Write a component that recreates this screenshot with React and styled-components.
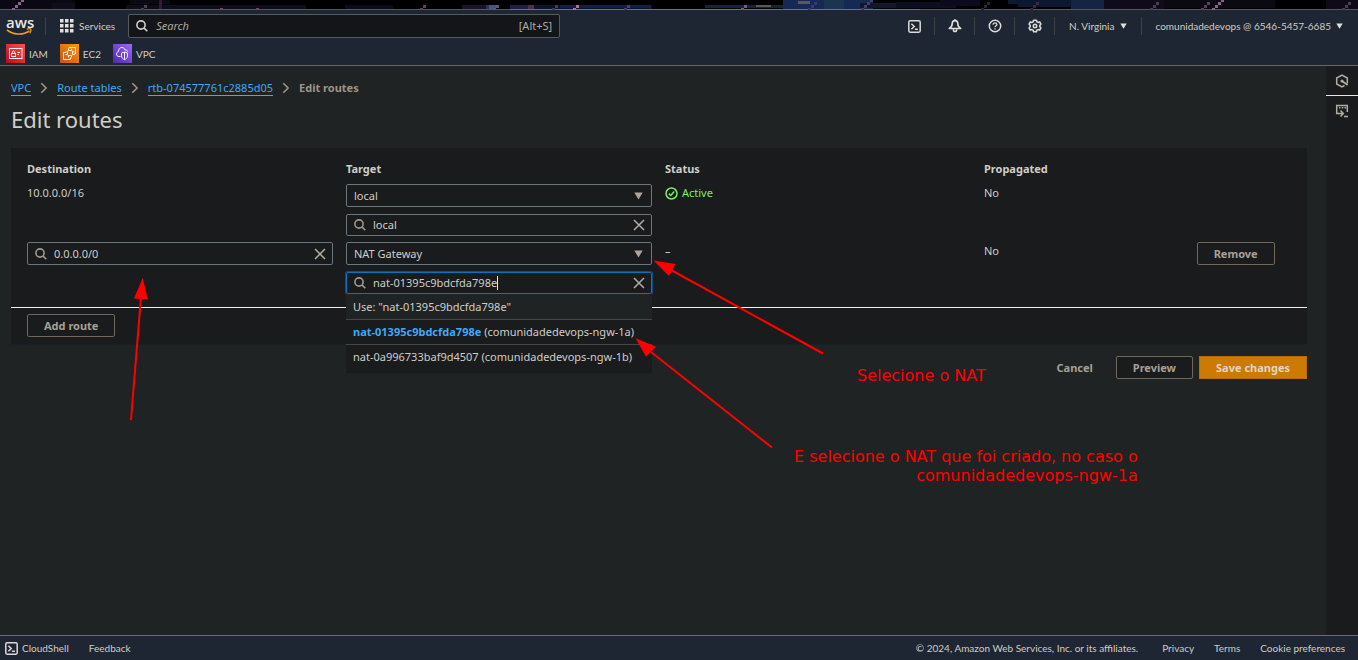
import React from "react";
import styled, { createGlobalStyle, css } from "styled-components";

const GlobalStyle = createGlobalStyle`
  * { box-sizing: border-box; }
  html, body { margin: 0; padding: 0; }
  body {
    background: #1f2324;
    color: #d1cdc7;
    font-family: "Noto Sans", "Open Sans", sans-serif;
    font-size: 11px;
    line-height: 18px;
  }
  button, input, select { font: inherit; color: inherit; margin: 0; }
`;

const Page = styled.div`
  position: relative;
  display: flex;
  flex-direction: column;
  min-height: 100vh;
`;

/* ---------- desktop strip above the console ---------- */

const Strip = styled.svg`
  display: block;
  width: 100%;
  height: 10px;
  background: #000;
`;

/* ---------- header ---------- */

const Header = styled.header`
  background: #1d2632;
  border-bottom: 1px solid #6b665c;
  font-family: Lato, sans-serif;
  font-size: 10px;
`;

const NavRow = styled.div`
  display: flex;
  align-items: center;
  height: 32px;
  padding: 0 15px 0 6px;
`;

const Logo = styled.a`
  display: flex;
  flex-direction: column;
  width: 25px;
  color: #e8e6e3;
  text-decoration: none;
  font: 600 15px/12px "Open Sans", sans-serif;
  svg { display: block; }
`;

const Divider = styled.span`
  width: 1px;
  height: 18px;
  background: #3a4147;
  margin: 0 ${(p) => p.$after || 0}px 0 ${(p) => p.$before || 0}px;
`;

const NavButton = styled.button`
  display: flex;
  align-items: center;
  justify-content: center;
  gap: 5px;
  min-width: ${(p) => (p.$icon ? 39 : 0)}px;
  border: 0;
  padding: 0 ${(p) => p.$right || 0}px 0 ${(p) => p.$left || 0}px;
  background: none;
  white-space: nowrap;
`;

const GlobalSearch = styled.label`
  display: flex;
  align-items: center;
  gap: 8px;
  width: 432px;
  height: 24px;
  margin-left: 13px;
  padding: 0 7px;
  background: #131519;
  border: 1px solid #565c5e;
  border-radius: 2px;
  font-family: "Noto Sans", sans-serif;
  font-size: 11px;
  color: #b0aaa0;
  input {
    flex: 1;
    min-width: 0;
    border: 0;
    padding: 0;
    outline: 0;
    background: none;
  }
  input::placeholder { color: #b0aaa0; font-style: italic; opacity: 1; }
`;

const NavEnd = styled.div`
  display: flex;
  align-items: center;
  margin-left: auto;
`;

const Favorites = styled.nav`
  display: flex;
  gap: 12px;
  height: 23px;
  padding: 2px 6px 0;
`;

const Favorite = styled.a`
  display: flex;
  align-items: center;
  gap: 4px;
  height: 19px;
  color: #d1cdc7;
  text-decoration: none;
`;

/* ---------- body ---------- */

const Body = styled.div`
  display: flex;
  flex: 1;
`;

const Main = styled.main`
  flex: 1;
  min-width: 0;
  padding: 13px 19px 0 11px;
`;

const Breadcrumbs = styled.nav`
  display: flex;
  align-items: flex-start;
  gap: 8px;
  height: 18px;
  color: #9d9488;
  font-weight: 700;
  svg { align-self: center; }
`;

const Crumb = styled.a`
  height: 17px;
  color: #41a8f6;
  font-weight: 400;
  text-decoration: none;
  border-bottom: 1px solid #41a8f6;
`;

const Title = styled.h1`
  margin: 8px 0 15px;
  font-size: 22px;
  line-height: 28px;
  font-weight: 400;
`;

const Panel = styled.section`
  background: #191b1c;
  border-bottom: 1px solid #182226;
`;

const Routes = styled.table`
  width: calc(100% - 20px);
  margin-left: 16px;
  table-layout: fixed;
  border-collapse: collapse;
  th {
    height: 36px;
    padding: 12px 0 6px;
    text-align: left;
    font-weight: 700;
  }
  td { padding: 0 13px 6px 0; vertical-align: top; }
`;

const Col = styled.col`
  width: ${(p) => p.$w}%;
`;

const Stack = styled.div`
  position: relative;
  display: flex;
  flex-direction: column;
  gap: 7px;
`;

const SelectBox = styled.div`
  display: grid;
  align-items: center;
  height: 23px;
  border: 1px solid #6b767d;
  border-radius: 2px;
  select, svg { grid-area: 1 / 1; }
  select {
    appearance: none;
    width: 100%;
    height: 21px;
    padding: 0 7px;
    border: 0;
    outline: 0;
    background: transparent;
  }
  svg { justify-self: end; margin-right: 8px; pointer-events: none; }
`;

const SearchBox = styled.div`
  display: flex;
  align-items: center;
  height: ${(p) => (p.$tall ? 23 : 22)}px;
  padding: 0 6px 0 7px;
  border: 1px solid #6b767d;
  border-radius: 2px;
  ${(p) =>
    p.$active &&
    css`
      border-color: #0b72bd;
      box-shadow: 0 0 0 1px #0b4f80;
    `}
  input {
    field-sizing: content;
    min-width: 20px;
    height: 18px;
    margin-left: 7px;
    padding: 0;
    border: 0;
    outline: 0;
    background: none;
  }
`;

const Caret = styled.span`
  width: 1px;
  height: 14px;
  background: #e8e6e3;
`;

const ClearButton = styled.button`
  display: flex;
  margin-left: auto;
  padding: 0;
  border: 0;
  background: none;
`;

const Menu = styled.ul`
  position: absolute;
  top: 100%;
  left: 0;
  right: 0;
  z-index: 2;
  height: 80px;
  margin: 0;
  padding: 0;
  list-style: none;
  background: #191b1c;
  border-bottom: 1px solid #182226;
`;

const MenuItem = styled.li`
  height: ${(p) => (p.$first ? 26 : 25)}px;
  padding: ${(p) => (p.$first ? 4 : 3)}px 7px;
  white-space: nowrap;
  background: ${(p) => (p.$first ? "#1f2324" : "transparent")};
  border-bottom: 1px solid ${(p) => (p.$last ? "transparent" : "#42474a")};
  b { color: #41a8f6; }
`;

const Status = styled.span`
  display: flex;
  align-items: center;
  gap: 4px;
  color: #82e96b;
`;

const Button = styled.button`
  height: 23px;
  padding: 0 16px;
  border: 1px solid ${(p) => (p.$primary ? "#b56d06" : p.$plain ? "transparent" : "#706759")};
  border-radius: ${(p) => (p.$primary ? 0 : 2)}px;
  background: ${(p) => (p.$primary ? "#cc7a00" : p.$plain ? "transparent" : "#191b1c")};
  color: ${(p) => (p.$primary ? "#ddd6cb" : "#a8a095")};
  font-weight: 700;
  line-height: 18px;
  white-space: nowrap;
`;

const PanelFooter = styled.div`
  margin-top: 7px;
  padding: 6px 16px 7px;
  border-top: 1px solid #f0efed;
`;

const Actions = styled.div`
  display: flex;
  justify-content: flex-end;
  gap: 6px;
  margin-top: 11px;
`;

const Rail = styled.aside`
  width: 32px;
  background: #191b1c;
`;

const RailButton = styled.button`
  display: flex;
  align-items: center;
  justify-content: center;
  width: 100%;
  height: 30px;
  padding: 0;
  border: 0;
  border-bottom: 1px solid ${(p) => (p.$current ? "#e8e6e3" : "transparent")};
  background: none;
`;

/* ---------- footer ---------- */

const Footer = styled.footer`
  display: flex;
  align-items: center;
  gap: 20px;
  height: 25px;
  padding: 0 13px 0 5px;
  background: #1d2632;
  border-top: 1px solid #736a5c;
  font-family: Lato, sans-serif;
  font-size: 10px;
  white-space: nowrap;
`;

const FooterLink = styled.a`
  display: flex;
  align-items: center;
  gap: 4px;
  color: #d1cdc7;
  text-decoration: none;
`;

const Legal = styled.div`
  display: flex;
  gap: 20px;
  margin-left: auto;
  span { margin-right: 4px; }
`;

/* ---------- annotations over the page ---------- */

const Arrows = styled.svg`
  position: absolute;
  top: 0;
  left: 0;
  z-index: 3;
  pointer-events: none;
`;

const Note = styled.p`
  position: absolute;
  left: ${(p) => p.$x}px;
  top: ${(p) => p.$y}px;
  z-index: 3;
  margin: 0;
  color: #f00;
  font: 16px/19px "DejaVu Sans", sans-serif;
  text-align: right;
  white-space: nowrap;
`;

/* ---------- icons ---------- */

const SearchIcon = ({ color = "#a0978b" }) => (
  <svg width="12" height="12" viewBox="0 0 12 12" fill="none" stroke={color} strokeWidth="1.6">
    <circle cx="5" cy="5" r="4.1" />
    <path d="M7.900 7.900l3.400 3.400" />
  </svg>
);

const CloseIcon = () => (
  <svg width="12" height="12" viewBox="0 0 12 12" fill="none" stroke="#b3aca2" strokeWidth="1.5">
    <path d="M1 1l10 10M11 1L1 11" />
  </svg>
);

const TriangleIcon = ({ w = 9, h = 8, color = "#aea69b" }) => (
  <svg width={w} height={h} viewBox="0 0 9 8">
    <path d="M0.3 0.5h8.4L4.5 7.5z" fill={color} />
  </svg>
);

const ChevronIcon = () => (
  <svg width="10" height="12" viewBox="0 0 10 12" fill="none" stroke="#9d9488" strokeWidth="1.6">
    <path d="M2.300 1.200L7.100 6l-4.800 4.800" />
  </svg>
);

const ShellIcon = () => (
  <svg width="13" height="13" viewBox="0 0 13 13" fill="none" stroke="#dcdad6" strokeWidth="1.5">
    <rect x="0.8" y="0.8" width="11.4" height="11.4" rx="1.4" />
    <path d="M3.400 3.800l2.800 2.700-2.800 2.700M6.900 9.300h3" />
  </svg>
);

const BellIcon = () => (
  <svg width="14" height="14" viewBox="0 0 14 14" fill="none" stroke="#e3e1dd" strokeWidth="1.6" strokeLinejoin="round">
    <path d="M7 1.600c-2 0-2.800 1.400-2.800 3.200 0 2.300-1 3.600-2.900 4.700h11.400C10.800 8.400 9.800 7.100 9.800 4.800c0-1.800-.8-3.200-2.800-3.200z" />
    <path d="M5.300 10.200c0 1.600.6 2.300 1.700 2.300s1.700-.7 1.700-2.300M7 0.300v1.300" />
  </svg>
);

const HelpIcon = () => (
  <svg width="14" height="14" viewBox="0 0 14 14" fill="none" stroke="#dcdad6" strokeWidth="1.5">
    <circle cx="7" cy="7" r="5.700" />
    <path d="M5.100 5.700c0-1.200.8-1.900 1.900-1.900s1.900.7 1.900 1.700c0 1.300-1.900 1.300-1.900 2.700M7 9.200v1.300" strokeWidth="1.300" />
  </svg>
);

const GearIcon = () => (
  <svg width="14" height="14" viewBox="0 0 14 14" fill="none" stroke="#dcdad6" strokeWidth="1.600" strokeLinejoin="round">
    <path d="M5.600 1.200h2.800l.4 1.500 1.300.7 1.600-.5 1.200 2.200-1.100 1.300v1.200l1.100 1.300-1.200 2.200-1.600-.5-1.300.7-.4 1.500H5.600l-.4-1.500-1.300-.7-1.600.5-1.200-2.200 1.100-1.300V6.400L1.100 5.100l1.200-2.200 1.600.5 1.300-.7z" />
    <circle cx="7" cy="7" r="1.700" />
  </svg>
);

const GridIcon = () => (
  <svg width="14" height="14" viewBox="0 0 14 14" fill="#e3e1dd">
    {[0, 5, 10].map((y) => [0, 5, 10].map((x) => <rect key={`${x}-${y}`} x={x} y={y} width="3.500" height="3.500" />))}
  </svg>
);

const SmileIcon = () => (
  <svg width="26" height="8" viewBox="0 0 26 8" fill="none" stroke="#f79a1e">
    <path d="M1 1.800C6.500 6.800 17 7.600 23.300 2.800" strokeWidth="1.600" />
    <path d="M20.800 1.200c1.700-.5 3.300-.6 3.900-.1.500.6 0 2.400-.9 4" strokeWidth="1.300" />
  </svg>
);

const CheckIcon = () => (
  <svg width="13" height="13" viewBox="0 0 13 13" fill="none" stroke="#82e96b" strokeWidth="1.500">
    <circle cx="6.500" cy="6.500" r="5.500" />
    <path d="M3.800 6.600l2 1.900 3.400-3.900" />
  </svg>
);

const HexIcon = () => (
  <svg width="14" height="14" viewBox="0 0 14 14" fill="none" stroke="#b3aca2" strokeWidth="1.500">
    <path d="M9.500 11.500L7 13 1.700 10V4L7 1l5.300 3v5.500" />
    <path d="M7.200 7.200l5.500 3.800" strokeWidth="1.800" />
    <circle cx="7" cy="7" r="1.600" fill="#b3aca2" stroke="none" />
  </svg>
);

const PanelShellIcon = () => (
  <svg width="14" height="14" viewBox="0 0 14 14" fill="none" stroke="#b3aca2" strokeWidth="1.500">
    <path d="M4 9.500H1.700V1.500h10.600V8" />
    <path d="M4 3.700h1.500M6.800 3.700h1.500M9.500 3.700h1.500" />
    <path d="M3.500 9.500h4M5.500 6.500l2.800 3-2.800 3M9 12.500h4" />
  </svg>
);

const ServiceIcon = ({ id, from, to, children }) => (
  <svg width="19" height="19" viewBox="0 0 19 19" fill="none" stroke="#f0eeee" strokeWidth="1">
    <defs>
      <linearGradient id={id} x1="0" y1="1" x2="1" y2="0">
        <stop offset="0" stopColor={from} />
        <stop offset="1" stopColor={to} />
      </linearGradient>
    </defs>
    <rect width="19" height="19" fill={`url(#${id})`} stroke="none" />
    {children}
  </svg>
);

const IamIcon = () => (
  <ServiceIcon id="iam" from="#bd0816" to="#ff5252">
    <rect x="3.500" y="4.500" width="12.500" height="10" />
    <rect x="5.500" y="9.500" width="4" height="3" />
    <path d="M6.300 9.300V8.200a1.200 1.200 0 012.400 0v1.100M11.500 8.500H14M11.500 10.500h1.500" />
  </ServiceIcon>
);

const Ec2Icon = () => (
  <ServiceIcon id="ec2" from="#c8511b" to="#ff9900">
    <rect x="7.500" y="6.500" width="5" height="5" rx="1" />
    <path d="M8.500 6V4.500M11.500 6V4.500M8.500 12v1.500M11.500 12v1.500M7 8H5.500M7 10.500H5.500M13 8h1.500M13 10.500h1.500" />
    <path d="M9 4.500v-1h6.500v6.500H14M5.500 8.500h-2v7h7v-2" />
  </ServiceIcon>
);

const VpcIcon = () => (
  <ServiceIcon id="vpc" from="#4d27a8" to="#a166ff">
    <path d="M7.500 12.500H6C4.300 12.500 3.500 11.300 3.500 10S4.400 7.800 5.500 7.500C5.600 5 7 3.500 8.800 3.500c1.700 0 2.800 1 3.200 2.500 1.500-.3 2.600.5 2.700 1.700" />
    <path d="M11.500 8L8.500 9v3c0 1.600 1.200 3 3 3.700 1.800-.7 3-2.100 3-3.700V9zM11.500 8v7.700" />
  </ServiceIcon>
);

const STRIP_BLOCKS = [
  [0, 0, 75, 10, "#0a0812"], [52, 3, 23, 6, "#100c1a"], [126, 5, 180, 5, "#0d0c18"],
  [130, 0, 40, 4, "#0b0a14"], [159, 0, 3, 10, "#35163f"], [345, 5, 48, 4, "#0c0a18"],
  [462, 5, 24, 5, "#19132c"], [486, 5, 7, 4, "#23365c"], [489, 5, 7, 4, "#44557f"],
  [510, 5, 24, 5, "#241d3d"], [528, 5, 6, 4, "#4f3046"], [534, 5, 118, 5, "#0a1328"],
  [560, 5, 91, 3, "#102044"], [705, 5, 78, 3, "#14233c"], [756, 5, 15, 2, "#5c5858"],
  [783, 0, 90, 9, "#152a52"], [798, 1, 12, 3, "#5c5858"], [824, 0, 20, 9, "#1b3450"],
  [860, 3, 40, 5, "#11162e"], [896, 2, 60, 6, "#0c0e22"], [940, 0, 40, 6, "#0c0a1c"],
  [1008, 0, 10, 4, "#0c1730"], [1018, 0, 54, 7, "#0c1730"], [1071, 0, 33, 10, "#142442"],
  [1104, 0, 60, 9, "#0f0b1a"], [1164, 0, 111, 8, "#0b0912"], [1326, 0, 32, 9, "#0e0a18"],
];

/* Each streak climbs to the right in 3px steps: [x, steps, colour]. */
const STRIP_STREAKS = [
  [12, 4, "#8a6390"], [141, 2, "#4d3a55"], [220, 1, "#6b4a6e"], [256, 1, "#6b4a6e"],
  [420, 2, "#5d4450"], [493, 2, "#565a80"], [552, 2, "#4a3a52"], [573, 2, "#b5738a"],
  [624, 2, "#4a4260"], [741, 2, "#7d5a85"], [808, 3, "#3d3a66"], [861, 4, "#4a3a66"],
  [981, 3, "#2e2233"], [1030, 3, "#3a2a3c"], [1150, 3, "#4a3f52"], [1201, 3, "#5a3f5e"],
  [1212, 4, "#8a6390"], [1342, 3, "#4a3f52"],
];

const WallpaperStrip = () => (
  <Strip viewBox="0 0 1358 10" preserveAspectRatio="none" shapeRendering="crispEdges" aria-hidden="true">
    {STRIP_BLOCKS.map(([x, y, w, h, fill], i) => (
      <rect key={i} x={x} y={y} width={w} height={h} fill={fill} />
    ))}
    <rect y="9" width="1358" height="1" fill="#565560" />
    <rect x="510" y="9" width="410" height="1" fill="#5f7199" />
    {STRIP_STREAKS.map(([x, steps, fill]) =>
      Array.from({ length: steps }, (_, i) => (
        <rect key={`${x}-${i}`} x={x + i * 3} y={8 - i * 3} width="3" height={i ? 3 : 2} fill={fill} />
      ))
    )}
  </Strip>
);

const ArrowOverlay = () => (
  <Arrows width="860" height="460" viewBox="0 0 860 460" aria-hidden="true" stroke="#f00" strokeWidth="2" fill="#f00">
    <path d="M131 420L141 297M823 353.500L671 270M772 447.500L651 352" />
    <path d="M142.700 278L134 298.500l14 1zM653.500 260.500l22 3.500-6.500 12zM635.600 338.300l20.400 8.400-10 10z" stroke="none" />
  </Arrows>
);

/* ---------- composed controls ---------- */

const TargetSelect = ({ label, value }) => (
  <SelectBox>
    <select aria-label={label} defaultValue={value}>
      <option>{value}</option>
    </select>
    <TriangleIcon />
  </SelectBox>
);

const SearchField = ({ label, value, tall, active }) => (
  <SearchBox $tall={tall} $active={active}>
    <SearchIcon />
    <input aria-label={label} type="text" defaultValue={value} />
    {active && <Caret />}
    <ClearButton aria-label={`Clear ${label}`}>
      <CloseIcon />
    </ClearButton>
  </SearchBox>
);

export default function App() {
  return (
    <Page>
      <GlobalStyle />
      <WallpaperStrip />
      <Header>
        <NavRow>
          <Logo href="#">
            aws
            <SmileIcon />
          </Logo>
          <Divider $before={14} $after={14} />
          <NavButton>
            <GridIcon />
            Services
          </NavButton>
          <GlobalSearch>
            <SearchIcon color="#d1cdc7" />
            <input type="text" placeholder="Search" aria-label="Search" />
            [Alt+S]
          </GlobalSearch>
          <NavEnd>
            <NavButton $icon aria-label="CloudShell"><ShellIcon /></NavButton>
            <Divider />
            <NavButton $icon aria-label="Notifications"><BellIcon /></NavButton>
            <Divider />
            <NavButton $icon aria-label="Help"><HelpIcon /></NavButton>
            <Divider />
            <NavButton $icon aria-label="Settings"><GearIcon /></NavButton>
            <Divider />
            <NavButton $left={14} $right={14}>
              N. Virginia
              <TriangleIcon w={7} h={6} color="#e3e1dd" />
            </NavButton>
            <Divider />
            <NavButton $left={14}>
              comunidadedevops @ 6546-5457-6685
              <TriangleIcon w={7} h={6} color="#e3e1dd" />
            </NavButton>
          </NavEnd>
        </NavRow>
        <Favorites aria-label="Favorites">
          <Favorite href="#"><IamIcon />IAM</Favorite>
          <Favorite href="#"><Ec2Icon />EC2</Favorite>
          <Favorite href="#"><VpcIcon />VPC</Favorite>
        </Favorites>
      </Header>

      <Body>
        <Main>
          <Breadcrumbs aria-label="Breadcrumbs">
            <Crumb href="#">VPC</Crumb>
            <ChevronIcon />
            <Crumb href="#">Route tables</Crumb>
            <ChevronIcon />
            <Crumb href="#">rtb-074577761c2885d05</Crumb>
            <ChevronIcon />
            <span>Edit routes</span>
          </Breadcrumbs>
          <Title>Edit routes</Title>

          <Panel>
            <Routes>
              <colgroup>
                <Col $w={25} />
                <Col $w={25} />
                <Col $w={25} />
                <Col $w={16.667} />
                <Col $w={8.333} />
              </colgroup>
              <thead>
                <tr>
                  <th>Destination</th>
                  <th>Target</th>
                  <th>Status</th>
                  <th>Propagated</th>
                  <th aria-label="Actions" />
                </tr>
              </thead>
              <tbody>
                <tr>
                  <td>10.0.0.0/16</td>
                  <td>
                    <Stack>
                      <TargetSelect label="Target type" value="local" />
                      <SearchField label="Target" value="local" />
                    </Stack>
                  </td>
                  <td><Status><CheckIcon />Active</Status></td>
                  <td>No</td>
                  <td />
                </tr>
                <tr>
                  <td><SearchField label="Destination" value="0.0.0.0/0" tall /></td>
                  <td>
                    <Stack>
                      <TargetSelect label="Target type" value="NAT Gateway" />
                      <SearchField label="Target" value="nat-01395c9bdcfda798e" active />
                      <Menu>
                        <MenuItem $first>Use: "nat-01395c9bdcfda798e"</MenuItem>
                        <MenuItem><b>nat-01395c9bdcfda798e</b> (comunidadedevops-ngw-1a)</MenuItem>
                        <MenuItem $last>nat-0a996733baf9d4507 (comunidadedevops-ngw-1b)</MenuItem>
                      </Menu>
                    </Stack>
                  </td>
                  <td>–</td>
                  <td>No</td>
                  <td><Button>Remove</Button></td>
                </tr>
              </tbody>
            </Routes>
            <PanelFooter>
              <Button>Add route</Button>
            </PanelFooter>
          </Panel>

          <Actions>
            <Button $plain>Cancel</Button>
            <Button>Preview</Button>
            <Button $primary>Save changes</Button>
          </Actions>
        </Main>
        <Rail>
          <RailButton $current aria-label="Info panel"><HexIcon /></RailButton>
          <RailButton aria-label="Shell panel"><PanelShellIcon /></RailButton>
        </Rail>
      </Body>

      <Footer>
        <FooterLink href="#"><ShellIcon />CloudShell</FooterLink>
        <FooterLink href="#">Feedback</FooterLink>
        <Legal>
          <span>© 2024, Amazon Web Services, Inc. or its affiliates.</span>
          <FooterLink href="#">Privacy</FooterLink>
          <FooterLink href="#">Terms</FooterLink>
          <FooterLink href="#">Cookie preferences</FooterLink>
        </Legal>
      </Footer>

      <ArrowOverlay />
      <Note $x={857} $y={366}>Selecione o NAT</Note>
      <Note $x={794} $y={447}>
        E selecione o NAT que foi criado, no caso o<br />
        comunidadedevops-ngw-1a
      </Note>
    </Page>
  );
}
